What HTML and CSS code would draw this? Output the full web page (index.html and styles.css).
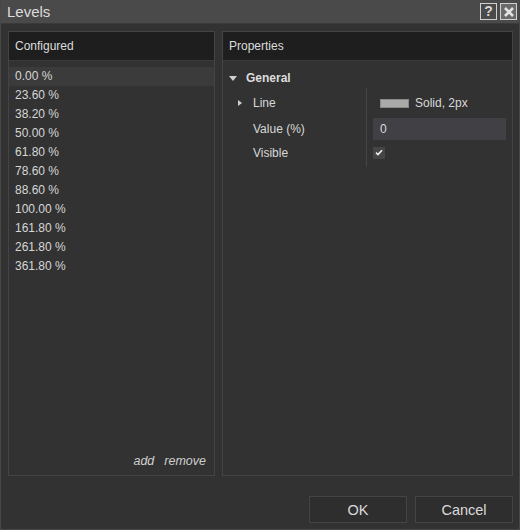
FILE: index.html
```html
<!DOCTYPE html>
<html>
<head>
<meta charset="utf-8">
<link rel="stylesheet" href="styles.css">
</head>
<body>
<div class="window">
  <div class="titlebar">
    <span class="title">Levels</span>
    <div class="title-buttons">
      <span class="tbtn help">?</span>
      <span class="tbtn close">
        <svg width="10" height="10" viewBox="0 0 10 10"><path d="M1 1L9 9M9 1L1 9" stroke="#e4e4e4" stroke-width="2.6" stroke-linecap="butt"/></svg>
      </span>
    </div>
  </div>
  <div class="content">
    <div class="panel">
      <div class="panel-header">Configured</div>
      <div class="list">
        <div class="row selected">0.00 %</div>
        <div class="row">23.60 %</div>
        <div class="row">38.20 %</div>
        <div class="row">50.00 %</div>
        <div class="row">61.80 %</div>
        <div class="row">78.60 %</div>
        <div class="row">88.60 %</div>
        <div class="row">100.00 %</div>
        <div class="row">161.80 %</div>
        <div class="row">261.80 %</div>
        <div class="row">361.80 %</div>
      </div>
      <div class="list-actions">
        <span class="action">add</span>
        <span class="action">remove</span>
      </div>
    </div>
    <div class="panel">
      <div class="panel-header">Properties</div>
      <div class="group">
        <span class="tri-down"></span>
        <span class="group-name">General</span>
      </div>
      <div class="props">
        <div class="labels">
          <div class="prow prow-line"><span class="tri-right"></span>Line</div>
          <div class="prow prow-value">Value (%)</div>
          <div class="prow prow-visible">Visible</div>
        </div>
        <div class="values">
          <div class="prow prow-line"><span class="swatch"></span>Solid, 2px</div>
          <div class="prow prow-value"><div class="input">0</div></div>
          <div class="prow prow-visible">
            <span class="checkbox">
              <svg width="8" height="7" viewBox="0 0 8 7"><path d="M1 3.6L3 5.6L7 1.2" fill="none" stroke="#f0f0f0" stroke-width="1.6"/></svg>
            </span>
          </div>
        </div>
      </div>
    </div>
  </div>
  <div class="footer">
    <div class="btn">OK</div>
    <div class="btn">Cancel</div>
  </div>
</div>
</body>
</html>
```

FILE: styles.css
```css
html, body {
  margin: 0;
  padding: 0;
  background: #323232;
}
body {
  font-family: "Liberation Sans", Arial, sans-serif;
  font-size: 12px;
  color: #d8d8d8;
}
.window {
  width: 520px;
  height: 530px;
  box-sizing: border-box;
  border: 1px solid #474747;
  border-top: none;
  background: #323232;
  display: flex;
  flex-direction: column;
}
.titlebar {
  height: 23px;
  background: #4a4a4a;
  border-bottom: 1px solid #3a3a3a;
  display: flex;
  align-items: center;
  justify-content: space-between;
  padding-left: 6px;
  padding-right: 2px;
}
.title {
  font-size: 15px;
  color: #dcdcdc;
  line-height: 23px;
}
.title-buttons {
  display: flex;
  gap: 3px;
  align-items: center;
}
.tbtn {
  width: 15px;
  height: 15px;
  border: 1px solid #cfcfcf;
  display: flex;
  align-items: center;
  justify-content: center;
  box-sizing: content-box;
}
.help {
  font-size: 14px;
  font-weight: bold;
  color: #d8d8d8;
  line-height: 15px;
}
.close {
  background: #6a6a6a;
}
.content {
  display: grid;
  grid-template-columns: 207px 291px;
  gap: 7px;
  padding: 7px 0 0 7px;
  height: 445px;
}
.panel {
  border: 1px solid #444444;
  display: flex;
  flex-direction: column;
  background: #323232;
}
.panel-header {
  height: 28px;
  line-height: 28px;
  background: #1e1e1e;
  padding-left: 6px;
  color: #dcdcdc;
  border-bottom: 1px solid #3a3a3a;
}
.list {
  flex: 1;
  padding-top: 6px;
}
.row {
  height: 19px;
  line-height: 19px;
  padding-left: 6px;
  color: #d6d6d6;
}
.row.selected {
  background: #3b3b3b;
}
.list-actions {
  display: flex;
  justify-content: flex-end;
  gap: 10px;
  padding: 0 8px 7px 0;
  font-style: italic;
  font-size: 12.5px;
  color: #cfcfcf;
  line-height: 14px;
}
.group {
  height: 20px;
  display: flex;
  align-items: center;
  margin-top: 7px;
  padding-left: 6px;
}
.tri-down {
  width: 0;
  height: 0;
  border-left: 4.5px solid transparent;
  border-right: 4.5px solid transparent;
  border-top: 5px solid #d0d0d0;
  margin-right: 9px;
  margin-top: 1px;
}
.group-name {
  font-weight: bold;
  color: #dcdcdc;
}
.props {
  display: flex;
}
.labels {
  width: 143px;
  border-right: 1px solid #454545;
  padding-top: 3px;
  padding-bottom: 2px;
}
.values {
  flex: 1;
  padding-top: 3px;
  padding-left: 6px;
  padding-right: 6px;
}
.prow {
  display: flex;
  align-items: center;
}
.labels .prow {
  padding-left: 30px;
}
.labels .prow-line {
  padding-left: 15px;
}
.prow-line {
  height: 24px;
  margin-bottom: 3px;
}
.prow-value {
  height: 22px;
}
.prow-visible {
  height: 25px;
}
.tri-right {
  width: 0;
  height: 0;
  border-top: 3.5px solid transparent;
  border-bottom: 3.5px solid transparent;
  border-left: 4px solid #d0d0d0;
  margin-right: 11px;
}
.swatch {
  width: 27px;
  height: 7px;
  background: #aaaaaa;
  border: 1px solid #8a8a8a;
  margin-left: 7px;
  margin-right: 6px;
}
.input {
  width: 100%;
  height: 22px;
  line-height: 22px;
  background: #404045;
  padding-left: 7px;
  box-sizing: border-box;
  color: #dcdcdc;
}
.checkbox {
  width: 12px;
  height: 12px;
  background: #454548;
  display: flex;
  align-items: center;
  justify-content: center;
}
.footer {
  display: flex;
  justify-content: flex-end;
  gap: 8px;
  padding: 20px 6px 0 0;
}
.btn {
  width: 98px;
  height: 27px;
  box-sizing: border-box;
  border: 1px solid #444444;
  background: #2e2e2e;
  display: flex;
  align-items: center;
  justify-content: center;
  font-size: 14.5px;
  color: #dadada;
}
```
